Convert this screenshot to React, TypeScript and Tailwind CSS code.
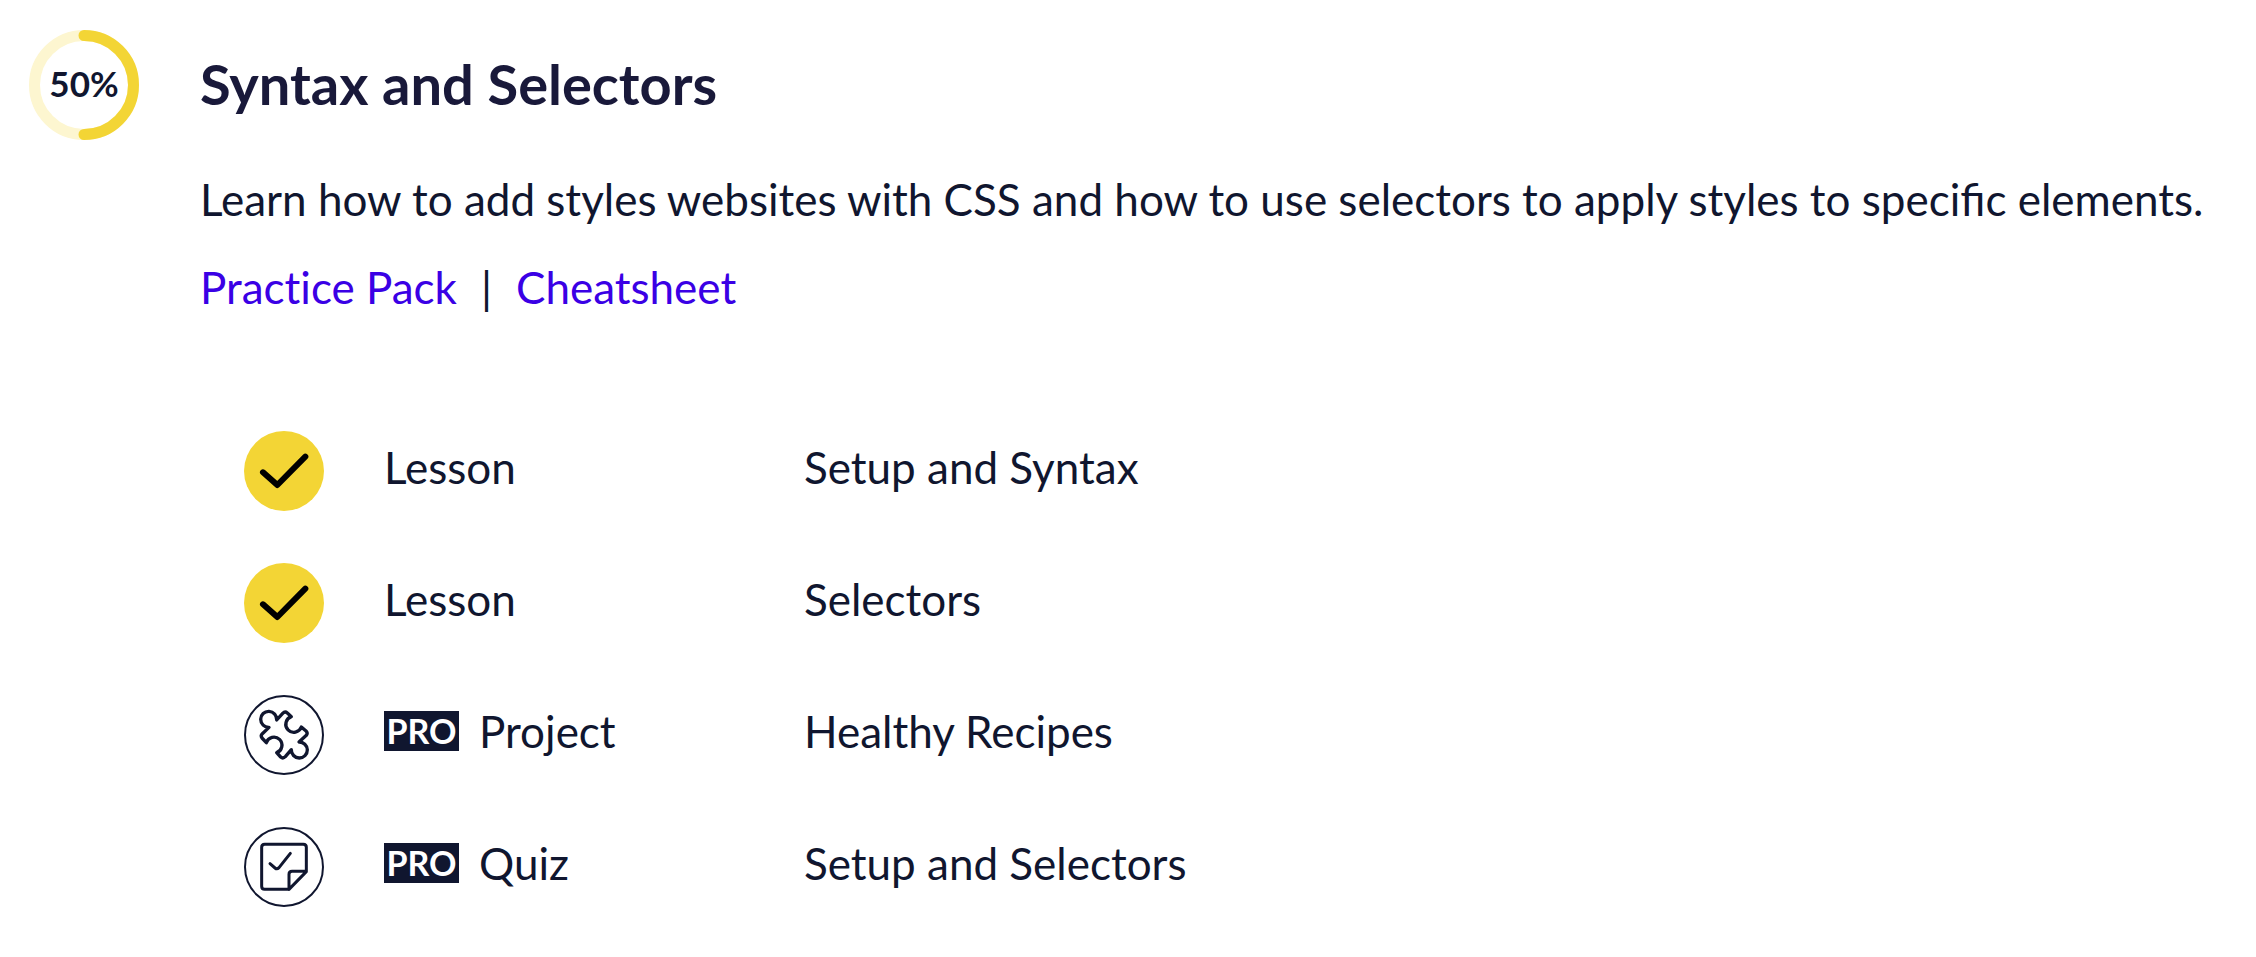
import type { ReactNode } from "react";

type Item = { kind: string; title: string; icon: "check" | "puzzle" | "quiz"; pro?: boolean };

const items: Item[] = [
  { kind: "Lesson", title: "Setup and Syntax", icon: "check" },
  { kind: "Lesson", title: "Selectors", icon: "check" },
  { kind: "Project", title: "Healthy Recipes", icon: "puzzle", pro: true },
  { kind: "Quiz", title: "Setup and Selectors", icon: "quiz", pro: true },
];

const icons: Record<Item["icon"], ReactNode> = {
  check: (
    <>
      <circle cx="120" cy="120" r="120" fill="#f3d535" stroke="none" />
      <path d="M57 124 L100 162 L184 77" stroke="#000" strokeWidth="18" />
    </>
  ),
  puzzle: (
    <>
      <circle cx="120" cy="120" r="117" strokeWidth="6" />
      <path
        strokeWidth="10"
        d="M98 75 L116 55 Q123 48 130 54 L142 65 A24 24 0 1 0 172 96 L187 109 Q192 115 187 121 L165 141 A24 24 0 1 1 142 164 L124 185 Q117 192 110 186 L98 173 A24 24 0 1 0 67 143 L54 129 Q49 122 55 116 L75 97 A24 24 0 1 1 98 75 Z"
      />
    </>
  ),
  quiz: (
    <>
      <circle cx="120" cy="120" r="117" strokeWidth="6" />
      <path
        strokeWidth="9"
        d="M135 187 H62 Q53 187 53 178 V61 Q53 52 62 52 H178 Q187 52 187 61 V134 L135 187 V142 Q135 133 144 133 H187 M78 110 L93 123 Q99 128 105 122 L139 79"
      />
    </>
  ),
};

function ProgressRing({ value }: { value: number }) {
  return (
    <div className="relative flex size-[110px] shrink-0 items-center justify-center" role="img" aria-label={`${value}%`}>
      <svg viewBox="0 0 110 110" className="absolute inset-0 size-full" fill="none" strokeWidth="11" aria-hidden="true">
        <circle cx="55" cy="55" r="49.5" stroke="#fdf6d0" />
        <circle
          cx="55"
          cy="55"
          r="49.5"
          stroke="#f3d535"
          strokeLinecap="round"
          pathLength="100"
          strokeDasharray={`${value} 100`}
          transform="rotate(-90 55 55)"
        />
      </svg>
      <span className="relative pb-1 text-[35px] leading-[40px] font-bold">{value}%</span>
    </div>
  );
}

export default function App() {
  return (
    <main className="flex min-h-screen items-start gap-[61px] bg-white pt-[30px] pl-[29px] font-['Lato',sans-serif] text-[44px] leading-[66px] text-[#10162f]">
      <ProgressRing value={50} />
      <section className="min-w-0 flex-1">
        <h2 className="pt-[19px] text-[56px] leading-[70px] font-bold text-[#19193a]">Syntax and Selectors</h2>
        <p className="mt-[47px]">
          Learn how to add styles websites with CSS and how to use selectors to apply styles to specific elements.
        </p>
        <nav className="mt-[22px] flex gap-[24px] [font-variant-ligatures:none]">
          <a href="#practice-pack" className="text-[#3a00e5]">Practice Pack</a>
          <span aria-hidden="true">|</span>
          <a href="#cheatsheet" className="text-[#3a00e5]">Cheatsheet</a>
        </nav>
        <ul className="mt-[85px] pl-[44px]">
          {items.map((item) => (
            <li key={item.title} className="grid h-[132px] grid-cols-[140px_420px_1fr] items-center">
              <svg
                viewBox="0 0 240 240"
                className="size-[80px]"
                fill="none"
                stroke="#10162f"
                strokeLinecap="round"
                strokeLinejoin="round"
                aria-hidden="true"
              >
                {icons[item.icon]}
              </svg>
              <div className="flex items-center gap-[20px] pb-2">
                {item.pro && (
                  <span className="flex h-[40px] w-[75px] items-center justify-center bg-[#10162f] text-[34px] leading-[40px] font-bold text-white">
                    PRO
                  </span>
                )}
                <span>{item.kind}</span>
              </div>
              <span className="pb-2">{item.title}</span>
            </li>
          ))}
        </ul>
      </section>
    </main>
  );
}
